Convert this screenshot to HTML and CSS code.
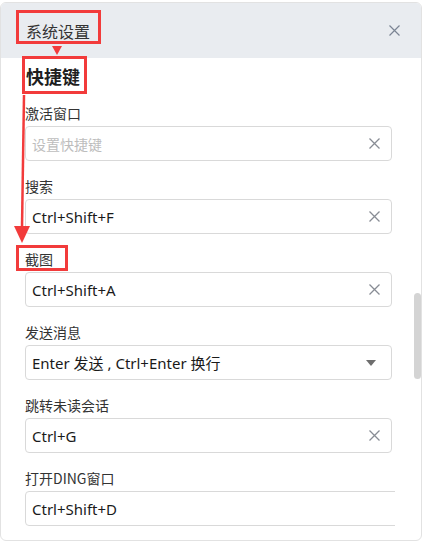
FILE: index.html
```html
<!DOCTYPE html>
<html lang="zh-CN">
<head>
<meta charset="utf-8">
<link rel="stylesheet" href="styles.css">
</head>
<body>
<div class="dialog">
  <div class="header">
    <span class="title">系统设置</span>
    <svg class="close" width="11" height="11" viewBox="0 0 11 11"><path d="M0.5 0.5L10.5 10.5M10.5 0.5L0.5 10.5" stroke="#7b8594" stroke-width="1.2" fill="none"/></svg>
  </div>
  <div class="body">
    <div class="content">
      <h2 class="section">快捷键</h2>
      <div class="group">
        <div class="label">激活窗口</div>
        <div class="input"><span class="placeholder">设置快捷键</span><svg class="clear" width="11" height="11" viewBox="0 0 11 11"><path d="M0.5 0.5L10.5 10.5M10.5 0.5L0.5 10.5" stroke="#888c94" stroke-width="1.3" fill="none"/></svg></div>
      </div>
      <div class="group">
        <div class="label">搜索</div>
        <div class="input"><span class="value">Ctrl+Shift+F</span><svg class="clear" width="11" height="11" viewBox="0 0 11 11"><path d="M0.5 0.5L10.5 10.5M10.5 0.5L0.5 10.5" stroke="#888c94" stroke-width="1.3" fill="none"/></svg></div>
      </div>
      <div class="group">
        <div class="label">截图</div>
        <div class="input"><span class="value">Ctrl+Shift+A</span><svg class="clear" width="11" height="11" viewBox="0 0 11 11"><path d="M0.5 0.5L10.5 10.5M10.5 0.5L0.5 10.5" stroke="#888c94" stroke-width="1.3" fill="none"/></svg></div>
      </div>
      <div class="group">
        <div class="label">发送消息</div>
        <div class="input select"><span class="value">Enter 发送 , Ctrl+Enter 换行</span><svg class="caret" width="10" height="6" viewBox="0 0 10 6"><path d="M0 0H10L5 6Z" fill="#6e6e6e"/></svg></div>
      </div>
      <div class="group">
        <div class="label">跳转未读会话</div>
        <div class="input"><span class="value">Ctrl+G</span><svg class="clear" width="11" height="11" viewBox="0 0 11 11"><path d="M0.5 0.5L10.5 10.5M10.5 0.5L0.5 10.5" stroke="#888c94" stroke-width="1.3" fill="none"/></svg></div>
      </div>
      <div class="group">
        <div class="label">打开DING窗口</div>
        <div class="input wide"><span class="value">Ctrl+Shift+D</span></div>
      </div>
    </div>
    <div class="track"><div class="thumb"></div></div>
  </div>
</div>
<svg class="annot" width="423" height="544" viewBox="0 0 423 544">
  <rect x="17.5" y="11.5" width="82" height="31" fill="none" stroke="#f23b3b" stroke-width="3"/>
  <path d="M52 46H62L57 55Z" fill="#f23b3b"/>
  <rect x="23.5" y="57.5" width="62" height="35" fill="none" stroke="#f23b3b" stroke-width="3"/>
  <path d="M24 95L22 228" stroke="#f23b3b" stroke-width="2.5" fill="none"/>
  <path d="M14 226H30L22 243Z" fill="#f23b3b"/>
  <rect x="17.5" y="246.5" width="49" height="23" fill="none" stroke="#f23b3b" stroke-width="3"/>
</svg>
</body>
</html>
```

FILE: styles.css
```css
* { box-sizing: border-box; }
html, body {
  margin: 0;
  padding: 0;
  background: #ffffff;
  width: 423px;
  height: 544px;
  overflow: hidden;
}
body {
  font-family: "Noto Sans", "Noto Sans CJK SC", sans-serif;
  color: #222;
  position: relative;
}
.dialog {
  margin-top: 2px;
  width: 422px;
  height: 539px;
  border: 1px solid #e2e2e2;
  border-radius: 6px;
  overflow: hidden;
  background: #fff;
  display: flex;
  flex-direction: column;
}
.header {
  height: 55px;
  flex: none;
  background: #e9ecf0;
  display: flex;
  align-items: center;
  justify-content: space-between;
  padding: 0 21px 0 25px;
}
.title {
  font-family: "Noto Sans CJK SC", sans-serif;
  font-size: 16px;
  color: #333;
}
.close { display: block; }
.body {
  flex: 1;
  display: flex;
  min-height: 0;
}
.content {
  width: 394px;
  flex: none;
  overflow: hidden;
  padding: 5px 0 0 24px;
}
.section {
  margin: 0 0 14px 1px;
  font-family: "Noto Sans CJK SC", sans-serif;
  font-size: 18px;
  font-weight: 700;
  line-height: 26px;
  color: #1f1f1f;
}
.group { margin-bottom: 15px; }
.label {
  font-family: "Noto Sans CJK SC", sans-serif;
  font-size: 14px;
  line-height: 20px;
  margin-bottom: 3px;
  color: #333;
}
.input {
  width: 367px;
  height: 35px;
  border: 1px solid #d9d9d9;
  border-radius: 4px;
  display: flex;
  align-items: center;
  justify-content: space-between;
  padding: 0 11px 0 6px;
  font-size: 15px;
}
.input.wide { width: 390px; }
.value { color: #1a1a1a; }
.placeholder {
  font-family: "Noto Sans CJK SC", sans-serif;
  font-size: 14px;
  color: #bdbdbd;
}
.clear { display: block; }
.caret { display: block; margin-right: 4px; }
.track {
  flex: 1;
  display: flex;
  justify-content: flex-end;
}
.thumb {
  width: 7px;
  height: 86px;
  margin-top: 235px;
  border-radius: 4px;
  background: #d4d4d4;
}
.annot {
  position: absolute;
  left: 0;
  top: 0;
  pointer-events: none;
}
```
